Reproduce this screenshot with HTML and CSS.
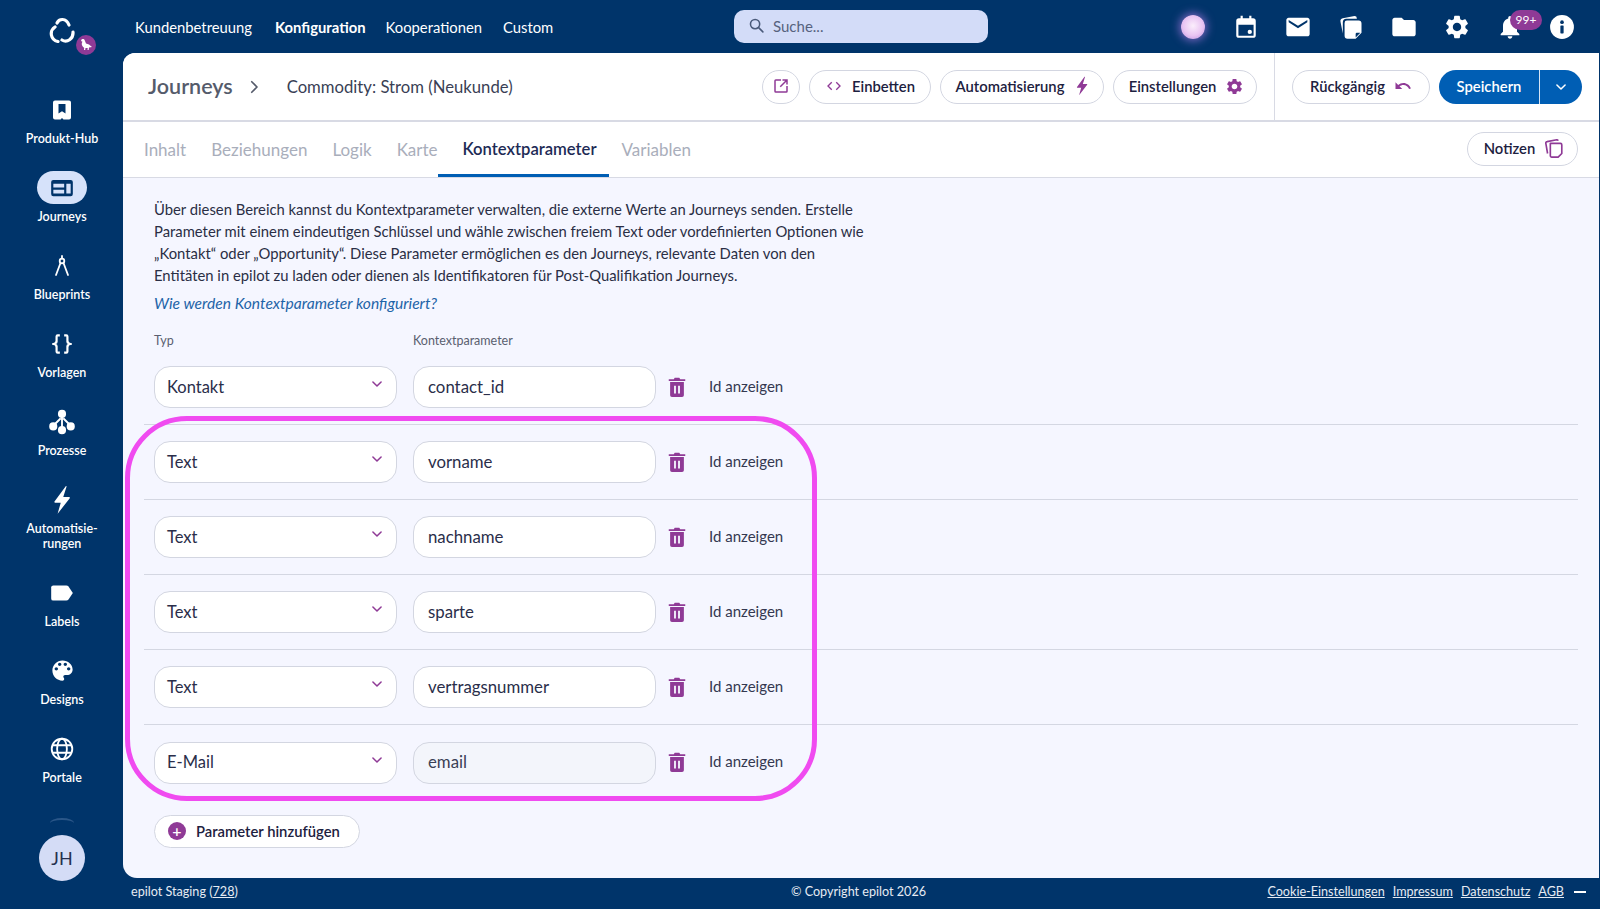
FILE: index.html
```html
<!DOCTYPE html>
<html lang="de">
<head>
    <meta charset="UTF-8">
    <meta name="viewport" content="width=device-width, initial-scale=1.0">
    <title>Journeys - epilot</title>
    <link rel="stylesheet" href="styles.css">
</head>

<body>
    <svg class="sprite" width="0" height="0">
        <symbol id="i-bolt" viewBox="0 0 24 24"><path d="M15 1 6 13.2c-.3.5 0 .9.5.9H11l-2.500 8.900 9.700-12.500c.3-.5 0-.9-.5-.9H13l2.600-8.300c.1-.4-.4-.6-.6-.3z"/></symbol>
        <symbol id="i-gear" viewBox="0 0 24 24"><path d="M19.14 12.94c.04-.3.06-.61.06-.94 0-.32-.02-.64-.07-.94l2.030-1.580c.18-.14.23-.41.12-.61l-1.920-3.320c-.12-.22-.37-.29-.59-.22l-2.390.96c-.5-.38-1.030-.7-1.620-.94l-.36-2.540c-.04-.24-.24-.41-.48-.41h-3.840c-.24 0-.43.17-.47.41l-.36 2.540c-.59.24-1.130.57-1.620.94l-2.390-.96c-.22-.08-.47 0-.59.22L2.740 8.870c-.12.21-.08.47.12.61l2.030 1.580c-.05.3-.09.63-.09.94s.02.64.07.94l-2.030 1.580c-.18.14-.23.41-.12.61l1.920 3.320c.12.22.37.29.59.22l2.390-.96c.5.38 1.030.7 1.620.94l.36 2.540c.05.24.24.41.48.41h3.840c.24 0 .44-.17.47-.41l.36-2.540c.59-.24 1.130-.56 1.620-.94l2.390.96c.22.08.47 0 .59-.22l1.920-3.320c.12-.22.07-.47-.12-.61l-2.010-1.580zM12 15.600c-1.980 0-3.600-1.620-3.600-3.600s1.620-3.600 3.600-3.600 3.600 1.620 3.600 3.600-1.620 3.600-3.600 3.600z"/></symbol>
        <symbol id="i-trash" viewBox="0 0 24 24"><path fill-rule="evenodd" d="M4.500 6.500h15V21a2 2 0 0 1-2 2h-11a2 2 0 0 1-2-2zm4.300 4v8.500h2v-8.500zm4.400 0v8.500h2v-8.500zM3 3.500h5.500L9.500 2h5l1 1.500H21v2H3z"/></symbol>
        <symbol id="i-chevron" viewBox="0 0 24 24"><path d="M5 8.500l7 7 7-7" fill="none" stroke="currentColor" stroke-width="2.600" stroke-linecap="round" stroke-linejoin="round"/></symbol>
    </svg>

    <div class="app">
        <aside class="sidebar">
            <div class="logo">
                <svg width="30" height="30" viewBox="0 0 30 30" fill="none" stroke="#fff" stroke-width="3.200" stroke-linecap="round">
                    <path d="M10 10C12 5.500 19 4.500 22 12"/>
                    <path d="M8 14C2 18 3.500 27 11 28.500"/>
                    <path d="M26 19C26.500 26 20 30 15 27"/>
                </svg>
                <span class="logo-badge">
                    <svg width="16" height="16" viewBox="0 0 16 16" fill="#fff"><path d="M3.500 2.500c1.500-.8 2.800-.4 3.200.8L8 6.500l3 1 3 2.500-3 .6-.3 2.400H9.500l.2-2H7.500l-.3 2H6l.2-2.300C4 9.800 3 6.500 4.500 4.800L3 4z"/></svg>
                </span>
            </div>
            <nav class="side-nav">
                <a class="side-item">
                    <span class="side-icon"><svg width="24" height="24" viewBox="0 0 24 24" fill="#fff"><path fill-rule="evenodd" d="M5 2.500h14a2 2 0 0 1 2 2v15a2 2 0 0 1-2 2h-5.500L12 20l-1.500 1.500H5a2 2 0 0 1-2-2v-15a2 2 0 0 1 2-2zm3.500 3.500v9.500l3.500-2.300 3.500 2.300V6z"/></svg></span>
                    <span class="side-label">Produkt-Hub</span>
                </a>
                <a class="side-item active">
                    <span class="side-icon"><svg width="26" height="26" viewBox="0 0 24 24" fill="#00346a"><path fill-rule="evenodd" d="M4 4.500h16a2 2 0 0 1 2 2v11a2 2 0 0 1-2 2H4a2 2 0 0 1-2-2v-11a2 2 0 0 1 2-2zm0 3.500v3.500h10V8zm0 5.500V17h10v-3.500zM16 8v9h4V8z"/></svg></span>
                    <span class="side-label">Journeys</span>
                </a>
                <a class="side-item">
                    <span class="side-icon"><svg width="24" height="24" viewBox="0 0 24 24" fill="none" stroke="#fff" stroke-width="1.800" stroke-linecap="round"><circle cx="12" cy="7" r="2.300"/><path d="M12 2v2.500M10.500 9 6 21M13.500 9 18 21"/></svg></span>
                    <span class="side-label">Blueprints</span>
                </a>
                <a class="side-item">
                    <span class="side-icon"><svg width="26" height="26" viewBox="0 0 24 24" fill="#fff"><path d="M8 3A2 2 0 0 0 6 5V9A2 2 0 0 1 4 11H3V13H4A2 2 0 0 1 6 15V19A2 2 0 0 0 8 21H10V19H8V14A2 2 0 0 0 6 12A2 2 0 0 0 8 10V5H10V3M16 3A2 2 0 0 1 18 5V9A2 2 0 0 0 20 11H21V13H20A2 2 0 0 0 18 15V19A2 2 0 0 1 16 21H14V19H16V14A2 2 0 0 1 18 12A2 2 0 0 1 16 10V5H14V3H16Z"/></svg></span>
                    <span class="side-label">Vorlagen</span>
                </a>
                <a class="side-item">
                    <span class="side-icon"><svg width="30" height="30" viewBox="0 0 24 24" fill="#fff" stroke="#fff" stroke-width="1.500"><circle cx="12" cy="5.500" r="2.500"/><circle cx="5" cy="15.500" r="2.500"/><circle cx="19" cy="15.500" r="2.500"/><circle cx="12" cy="18.500" r="2.500"/><path d="M12 7v10M11 9l-6 6M13 9l6 6" fill="none"/></svg></span>
                    <span class="side-label">Prozesse</span>
                </a>
                <a class="side-item tall">
                    <span class="side-icon"><svg width="30" height="30" fill="#fff"><use href="#i-bolt"/></svg></span>
                    <span class="side-label">Automatisie-<br>rungen</span>
                </a>
                <a class="side-item">
                    <span class="side-icon"><svg width="26" height="26" viewBox="0 0 24 24" fill="#fff"><path d="M2 7a2 2 0 0 1 2-2h12a2.500 2.500 0 0 1 2 1l4 6-4 6a2.500 2.500 0 0 1-2 1H4a2 2 0 0 1-2-2z"/></svg></span>
                    <span class="side-label">Labels</span>
                </a>
                <a class="side-item">
                    <span class="side-icon"><svg width="27" height="27" viewBox="0 0 24 24" fill="#fff"><path d="M12 3c-4.970 0-9 4.030-9 9s4.030 9 9 9c.83 0 1.500-.67 1.500-1.500 0-.39-.15-.74-.39-1.010-.23-.26-.38-.61-.38-.99 0-.83.67-1.500 1.500-1.500H16c2.760 0 5-2.240 5-5 0-4.420-4.030-8-9-8zm-5.500 9c-.83 0-1.500-.67-1.500-1.500S5.670 9 6.500 9 8 9.670 8 10.500 7.330 12 6.500 12zm3-4C8.670 8 8 7.330 8 6.500S8.670 5 9.500 5s1.500.67 1.500 1.500S10.330 8 9.500 8zm5 0c-.83 0-1.500-.67-1.500-1.500S13.670 5 14.500 5s1.500.67 1.500 1.500S15.330 8 14.500 8zm3 4c-.83 0-1.500-.67-1.500-1.500S16.670 9 17.500 9s1.500.67 1.500 1.500-.67 1.500-1.500 1.500z"/></svg></span>
                    <span class="side-label">Designs</span>
                </a>
                <a class="side-item">
                    <span class="side-icon"><svg width="26" height="26" viewBox="0 0 24 24" fill="none" stroke="#fff" stroke-width="1.700"><circle cx="12" cy="12" r="9.500"/><ellipse cx="12" cy="12" rx="4.500" ry="9.500"/><path d="M3 8.500h18M3 15.500h18"/></svg></span>
                    <span class="side-label">Portale</span>
                </a>
            </nav>
            <span class="side-more"></span>
            <div class="avatar">JH</div>
        </aside>

        <div class="right">
            <header class="topbar">
                <nav class="top-nav">
                    <a>Kundenbetreuung</a>
                    <a class="current">Konfiguration</a>
                    <a>Kooperationen</a>
                    <a class="custom">Custom</a>
                </nav>
                <div class="search">
                    <svg width="17" height="17" viewBox="0 0 24 24" fill="none" stroke="#4a5a7a" stroke-width="2.200" stroke-linecap="round"><circle cx="10" cy="10" r="6.500"/><path d="M15 15l6 6"/></svg>
                    <span>Suche...</span>
                </div>
                <div class="top-icons">
                    <span class="orb"></span>
                    <svg width="26" height="26" viewBox="0 0 24 24" fill="#fff"><path fill-rule="evenodd" d="M7 1.500h2V4h6V1.500h2V4h1.500A2.500 2.500 0 0 1 21 6.500v13a2.500 2.500 0 0 1-2.500 2.500h-13A2.500 2.500 0 0 1 3 19.500v-13A2.500 2.500 0 0 1 5.500 4H7zM5 10v9.500a.5.500 0 0 0 .5.500h13a.5.500 0 0 0 .5-.5V10zm10.500 4.500a2 2 0 1 1 0 4 2 2 0 0 1 0-4z"/></svg>
                    <svg width="28" height="28" viewBox="0 0 24 24" fill="#fff"><path d="M20 4H4c-1.100 0-2 .9-2 2v12c0 1.100.9 2 2 2h16c1.100 0 2-.9 2-2V6c0-1.100-.9-2-2-2zm0 4l-8 5-8-5V6l8 5 8-5v2z"/></svg>
                    <svg width="28" height="28" viewBox="0 0 24 24" fill="#fff"><path fill-rule="evenodd" d="M8.500 6.500h10a2.500 2.500 0 0 1 2.500 2.500v8l-5 5H9A2.500 2.500 0 0 1 6.500 19.500V8.500a2 2 0 0 1 2-2zM20 17h-3a1 1 0 0 0-1 1v3z"/><path d="M5 17.500 3 7.500A2.500 2.500 0 0 1 5 4.500L15 2.500a2 2 0 0 1 2 2v.5H8a3 3 0 0 0-3 3z"/></svg>
                    <svg width="28" height="28" viewBox="0 0 24 24" fill="#fff"><path d="M10 4H4c-1.100 0-1.990.9-1.990 2L2 18c0 1.100.9 2 2 2h16c1.100 0 2-.9 2-2V8c0-1.100-.9-2-2-2h-8l-2-2z"/></svg>
                    <svg width="28" height="28" fill="#fff"><use href="#i-gear"/></svg>
                    <span class="bell">
                        <svg width="28" height="28" viewBox="0 0 24 24" fill="#fff"><path d="M12 22c1.100 0 2-.9 2-2h-4c0 1.100.9 2 2 2zm6-6v-5c0-3.070-1.630-5.640-4.500-6.320V4c0-.83-.67-1.500-1.500-1.500s-1.500.67-1.500 1.500v.68C7.640 5.360 6 7.920 6 11v5l-2 2v1h16v-1l-2-2z"/></svg>
                        <span class="bell-badge">99+</span>
                    </span>
                    <svg width="26" height="26" viewBox="0 0 24 24"><circle cx="12" cy="12" r="11" fill="#fff"/><rect x="10.500" y="10.500" width="3" height="7.500" rx=".6" fill="#00346a"/><circle cx="12" cy="7.500" r="1.700" fill="#00346a"/></svg>
                </div>
            </header>

            <main class="card">
                <div class="head">
                    <div class="crumbs">
                        <span class="crumb-root">Journeys</span>
                        <svg class="crumb-sep" width="18" height="18" viewBox="0 0 24 24" fill="none" stroke="#555b6b" stroke-width="2.200" stroke-linecap="round" stroke-linejoin="round"><path d="M9 5l7 7-7 7"/></svg>
                        <span class="crumb-page">Commodity: Strom (Neukunde)</span>
                    </div>
                    <div class="head-actions">
                        <a class="btn btn-icon"><svg width="18" height="18" viewBox="0 0 24 24" fill="none" stroke="#8f3a96" stroke-width="2"><path d="M12 4H5a1 1 0 0 0-1 1v14a1 1 0 0 0 1 1h14a1 1 0 0 0 1-1v-7M14 4h6v6M20 4l-9 9"/></svg></a>
                        <a class="btn btn-embed"><svg width="18" height="18" viewBox="0 0 24 24" fill="none" stroke="#8f3a96" stroke-width="1.800"><path d="M9 7l-5 5 5 5M15 7l5 5-5 5"/></svg>Einbetten</a>
                        <a class="btn btn-auto">Automatisierung<svg width="20" height="20" fill="#8f3a96"><use href="#i-bolt"/></svg></a>
                        <a class="btn btn-settings">Einstellungen<svg width="19" height="19" fill="#8f3a96"><use href="#i-gear"/></svg></a>
                    </div>
                    <div class="head-save">
                        <a class="btn btn-undo">Rückgängig<svg width="18" height="18" viewBox="0 0 24 24" fill="#8f3a96"><path d="M12.500 8c-2.650 0-5.050.99-6.900 2.600L2 7v9h9l-3.620-3.620c1.390-1.160 3.160-1.880 5.120-1.880 3.540 0 6.550 2.310 7.600 5.500l2.370-.78C21.080 11.030 17.150 8 12.500 8z"/></svg></a>
                        <div class="save">
                            <a class="save-main">Speichern</a>
                            <a class="save-more"><svg width="14" height="14" color="#fff"><use href="#i-chevron"/></svg></a>
                        </div>
                    </div>
                </div>

                <div class="tabs">
                    <a class="tab">Inhalt</a>
                    <a class="tab">Beziehungen</a>
                    <a class="tab">Logik</a>
                    <a class="tab">Karte</a>
                    <a class="tab active">Kontextparameter</a>
                    <a class="tab">Variablen</a>
                    <a class="btn notizen">Notizen<svg width="22" height="22" viewBox="0 0 24 24" fill="none" stroke="#8f3a96" stroke-width="1.800" stroke-linejoin="round"><path d="M8 7h11a1.500 1.500 0 0 1 1.500 1.500V18l-4 4H9.500A1.500 1.500 0 0 1 8 20.500z"/><path d="M5 18 3 6.500A1.500 1.500 0 0 1 4.500 5L15 3a1.500 1.500 0 0 1 1.500 1"/></svg></a>
                </div>

                <section class="content">
                    <p class="intro">Über diesen Bereich kannst du Kontextparameter verwalten, die externe Werte an Journeys senden. Erstelle Parameter mit einem eindeutigen Schlüssel und wähle zwischen freiem Text oder vordefinierten Optionen wie „Kontakt“ oder „Opportunity“. Diese Parameter ermöglichen es den Journeys, relevante Daten von den Entitäten in epilot zu laden oder dienen als Identifikatoren für Post-Qualifikation Journeys.</p>
                    <a class="help-link">Wie werden Kontextparameter konfiguriert?</a>

                    <div class="col-labels">
                        <span>Typ</span>
                        <span>Kontextparameter</span>
                    </div>

                    <div class="rows">
                        <div class="param-row">
                            <div class="field select">Kontakt<svg width="14" height="14" color="#8f3a96"><use href="#i-chevron"/></svg></div>
                            <div class="field">contact_id</div>
                            <svg class="trash" width="22" height="22" fill="#8f3a96"><use href="#i-trash"/></svg>
                            <span class="show-id">Id anzeigen</span>
                        </div>
                        <div class="param-row">
                            <div class="field select">Text<svg width="14" height="14" color="#8f3a96"><use href="#i-chevron"/></svg></div>
                            <div class="field">vorname</div>
                            <svg class="trash" width="22" height="22" fill="#8f3a96"><use href="#i-trash"/></svg>
                            <span class="show-id">Id anzeigen</span>
                        </div>
                        <div class="param-row">
                            <div class="field select">Text<svg width="14" height="14" color="#8f3a96"><use href="#i-chevron"/></svg></div>
                            <div class="field">nachname</div>
                            <svg class="trash" width="22" height="22" fill="#8f3a96"><use href="#i-trash"/></svg>
                            <span class="show-id">Id anzeigen</span>
                        </div>
                        <div class="param-row">
                            <div class="field select">Text<svg width="14" height="14" color="#8f3a96"><use href="#i-chevron"/></svg></div>
                            <div class="field">sparte</div>
                            <svg class="trash" width="22" height="22" fill="#8f3a96"><use href="#i-trash"/></svg>
                            <span class="show-id">Id anzeigen</span>
                        </div>
                        <div class="param-row">
                            <div class="field select">Text<svg width="14" height="14" color="#8f3a96"><use href="#i-chevron"/></svg></div>
                            <div class="field">vertragsnummer</div>
                            <svg class="trash" width="22" height="22" fill="#8f3a96"><use href="#i-trash"/></svg>
                            <span class="show-id">Id anzeigen</span>
                        </div>
                        <div class="param-row">
                            <div class="field select">E-Mail<svg width="14" height="14" color="#8f3a96"><use href="#i-chevron"/></svg></div>
                            <div class="field disabled">email</div>
                            <svg class="trash" width="22" height="22" fill="#8f3a96"><use href="#i-trash"/></svg>
                            <span class="show-id">Id anzeigen</span>
                        </div>
                        <div class="highlight"></div>
                    </div>

                    <a class="btn add-param"><span class="plus">+</span>Parameter hinzufügen</a>
                </section>
            </main>

            <footer class="footer">
                <span class="foot-left">epilot Staging (<u>728</u>)</span>
                <span class="foot-mid">© Copyright epilot 2026</span>
                <span class="foot-links">
                    <u>Cookie-Einstellungen</u>
                    <u>Impressum</u>
                    <u>Datenschutz</u>
                    <u>AGB</u>
                    <span class="foot-dash"></span>
                </span>
            </footer>
        </div>
    </div>
</body>
</html>
```

FILE: styles.css
```css
* {
    box-sizing: border-box;
}

html, body {
    height: 100%;
}

body {
    margin: 0;
    font-family: Lato, "Open Sans", sans-serif;
    background: #dfe5ee;
    color: #1d2140;
    overflow: hidden;
}

.sprite {
    position: absolute;
}

.app {
    display: flex;
    height: 909px;
    padding: 2px 1px;
    background: #00346a;
}

/* sidebar */
.sidebar {
    width: 122px;
    flex: none;
    display: flex;
    flex-direction: column;
    align-items: center;
}

.logo {
    position: relative;
    width: 122px;
    height: 51px;
    padding: 11px 0 0 46px;
}

.logo-badge {
    position: absolute;
    left: 75px;
    top: 33px;
    width: 20px;
    height: 20px;
    border-radius: 50%;
    background: #8f3a96;
    display: flex;
    align-items: center;
    justify-content: center;
}

.side-nav {
    display: flex;
    flex-direction: column;
    align-items: center;
    padding-top: 40px;
    width: 100%;
}

.side-item {
    height: 78px;
    display: flex;
    flex-direction: column;
    align-items: center;
    color: #fff;
}

.side-item.tall {
    height: 93px;
}

.side-icon {
    width: 50px;
    height: 33px;
    border-radius: 17px;
    display: flex;
    align-items: center;
    justify-content: center;
}

.side-item.active .side-icon {
    background: #d6e2fa;
}

.side-label {
    margin-top: 5px;
    font-size: 12.500px;
    font-weight: 600;
    line-height: 15px;
    text-align: center;
}

.side-more {
    margin-top: 8px;
    width: 24px;
    height: 10px;
    flex: none;
    border-top: 2px solid #2a5688;
    border-radius: 50%;
}

.avatar {
    margin-top: 7px;
    width: 46px;
    height: 46px;
    border-radius: 50%;
    background: #d4dcf6;
    color: #25304f;
    font-size: 18px;
    display: flex;
    align-items: center;
    justify-content: center;
}

.right {
    flex: 1;
    min-width: 0;
    display: flex;
    flex-direction: column;
}

/* top bar */
.topbar {
    height: 51px;
    flex: none;
    padding-bottom: 2px;
    display: flex;
    align-items: center;
    color: #fff;
}

.top-nav {
    width: 611px;
    padding-left: 12px;
    display: flex;
    gap: 20px;
    font-size: 14.800px;
}

.top-nav a.current {
    font-weight: 700;
    margin-left: 3px;
}

.top-nav a.custom {
    margin-left: 1px;
}

.search {
    width: 254px;
    height: 33px;
    border-radius: 10px;
    background: #d3dcf8;
    color: #56627e;
    font-size: 15px;
    display: flex;
    align-items: center;
    gap: 8px;
    padding: 0 0 2px 14px;
}

.top-icons {
    margin-left: 193px;
    display: flex;
    align-items: center;
    gap: 25px;
}

.orb {
    width: 24px;
    height: 24px;
    margin-right: 3px;
    border-radius: 50%;
    background: radial-gradient(circle at 50% 45%, #fbeefc 0%, #e9c4f2 55%, #b58be0 100%);
    box-shadow: 0 0 8px 2px rgba(190, 130, 240, 0.6);
}

.bell {
    position: relative;
    display: flex;
}

.bell-badge {
    position: absolute;
    left: 14px;
    top: -3px;
    width: 32px;
    height: 20px;
    border-radius: 10px;
    background: #8f3a96;
    font-size: 12px;
    text-align: center;
    line-height: 19px;
}

/* main card */
.card {
    flex: 1;
    background: #f5f6ff;
    border-radius: 12px 0 0 14px;
    overflow: hidden;
    display: flex;
    flex-direction: column;
}

.head {
    height: 69px;
    flex: none;
    background: #fff;
    border-bottom: 2px solid #d8dae4;
    display: flex;
    align-items: center;
    padding-left: 25px;
}

.crumbs {
    display: flex;
    align-items: center;
    width: 614px;
}

.crumb-root {
    font-size: 21.500px;
    font-weight: 600;
    color: #555b6b;
    padding-bottom: 2px;
}

.crumb-sep {
    margin: 0 24px 0 12px;
}

.crumb-page {
    font-size: 16.700px;
    color: #3a3f55;
}

.btn {
    height: 34px;
    border: 1px solid #d3d6e1;
    border-radius: 17px;
    background: #fff;
    color: #1d2140;
    font-size: 14.800px;
    font-weight: 600;
    display: inline-flex;
    align-items: center;
    justify-content: center;
    gap: 8px;
    padding: 0 0 1px;
}

.btn-icon {
    width: 38px;
}

.btn-embed {
    width: 122px;
    gap: 9px;
}

.btn-auto {
    width: 164px;
    padding-left: 4px;
}

.btn-settings {
    width: 144px;
    gap: 9px;
    padding-left: 3px;
}

.btn-undo {
    width: 138px;
    gap: 9px;
}

.head-actions {
    display: flex;
    gap: 9px;
    height: 100%;
    align-items: center;
    padding-right: 17px;
    border-right: 1px solid #d8dae4;
}

.head-save {
    display: flex;
    gap: 9px;
    padding-left: 17px;
}

.save {
    display: flex;
    height: 34px;
    width: 143px;
    border-radius: 17px;
    overflow: hidden;
    background: #005eb4;
    color: #fff;
    font-size: 14.800px;
    font-weight: 600;
}

.save-main {
    width: 100px;
    padding-bottom: 1px;
    display: flex;
    align-items: center;
    justify-content: center;
}

.save-more {
    flex: 1;
    border-left: 1px solid #d5e4f5;
    display: flex;
    align-items: center;
    justify-content: center;
}

.tabs {
    height: 56px;
    flex: none;
    background: #fff;
    border-bottom: 1px solid #d8dae4;
    display: flex;
    align-items: center;
    padding: 0 21px 0 0;
}

.tab {
    height: 100%;
    display: flex;
    align-items: center;
    padding: 2px 12.500px 0;
    font-size: 17px;
    color: #a9aebb;
    border-bottom: 3px solid transparent;
}

.tab:first-child {
    padding-left: 21px;
}

.tab.active {
    color: #1d2a55;
    font-size: 16.600px;
    font-weight: 600;
    border-bottom-color: #005eb4;
    padding: 2px 12.500px 0 25px;
    margin-left: -12.500px;
}

.notizen {
    margin: 0 0 2px auto;
    width: 111px;
    padding-left: 4px;
}

/* form area */
.content {
    flex: 1;
    padding: 20px 21px 0;
}

.intro {
    margin: 0 0 0 10px;
    width: 722px;
    font-size: 14.820px;
    line-height: 22px;
    color: #2a2e45;
}

.help-link {
    display: block;
    margin: 6px 0 0 10px;
    font-size: 15.600px;
    font-style: italic;
    line-height: 22px;
    color: #1e64a8;
}

.col-labels {
    display: flex;
    margin: 19px 0 0 10px;
    font-size: 12.500px;
    line-height: 16px;
    color: #5a5f70;
}

.col-labels span:first-child {
    width: 259px;
}

.rows {
    position: relative;
    margin-top: 1px;
}

.param-row {
    height: 75px;
    padding: 16px 10px;
    display: flex;
    align-items: center;
    border-bottom: 1px solid #d4d7e2;
}

.param-row:nth-last-child(2) {
    border-bottom: 0;
}

.field {
    width: 243px;
    height: 42px;
    border: 1px solid #d3d6e1;
    border-radius: 16px;
    background: #fff;
    font-size: 16.800px;
    color: #2a2e4a;
    display: flex;
    align-items: center;
    justify-content: space-between;
    padding: 0 14px 2px;
}

.field.select {
    margin-right: 16px;
    padding: 0 12px 1px;
    font-size: 16.500px;
}

.field.select svg {
    margin: -5px 0 0 0;
}

.field.disabled {
    background: #f3f5fb;
    color: #3a3f55;
}

.trash {
    margin: -1px 0 0 10px;
    flex: none;
}

.show-id {
    margin: -3px 0 0 21px;
    font-size: 15px;
    color: #343850;
}

/* hand-drawn marker over the rows */
.highlight {
    position: absolute;
    left: -19px;
    top: 66px;
    width: 692px;
    height: 385px;
    border: 5px solid #f04bf0;
    border-radius: 62px;
    pointer-events: none;
}

.add-param {
    width: 206px;
    height: 33px;
    margin: 15px 0 0 10px;
    justify-content: flex-start;
    padding: 0 0 1px 13px;
    gap: 10px;
}

.plus {
    width: 18px;
    height: 18px;
    border-radius: 50%;
    background: #8f3a96;
    color: #fff;
    font-size: 16px;
    line-height: 17px;
    text-align: center;
}

/* footer */
.footer {
    height: 29px;
    flex: none;
    color: #e6ebf3;
    font-size: 12.600px;
    display: grid;
    grid-template-columns: 1fr auto 1fr;
    align-items: center;
    padding: 0 13px 2px 8px;
}

.foot-links {
    display: flex;
    align-items: center;
    justify-content: flex-end;
    gap: 8px;
}

.foot-dash {
    width: 12px;
    height: 2px;
    background: #fff;
    margin-left: 2px;
}
```
